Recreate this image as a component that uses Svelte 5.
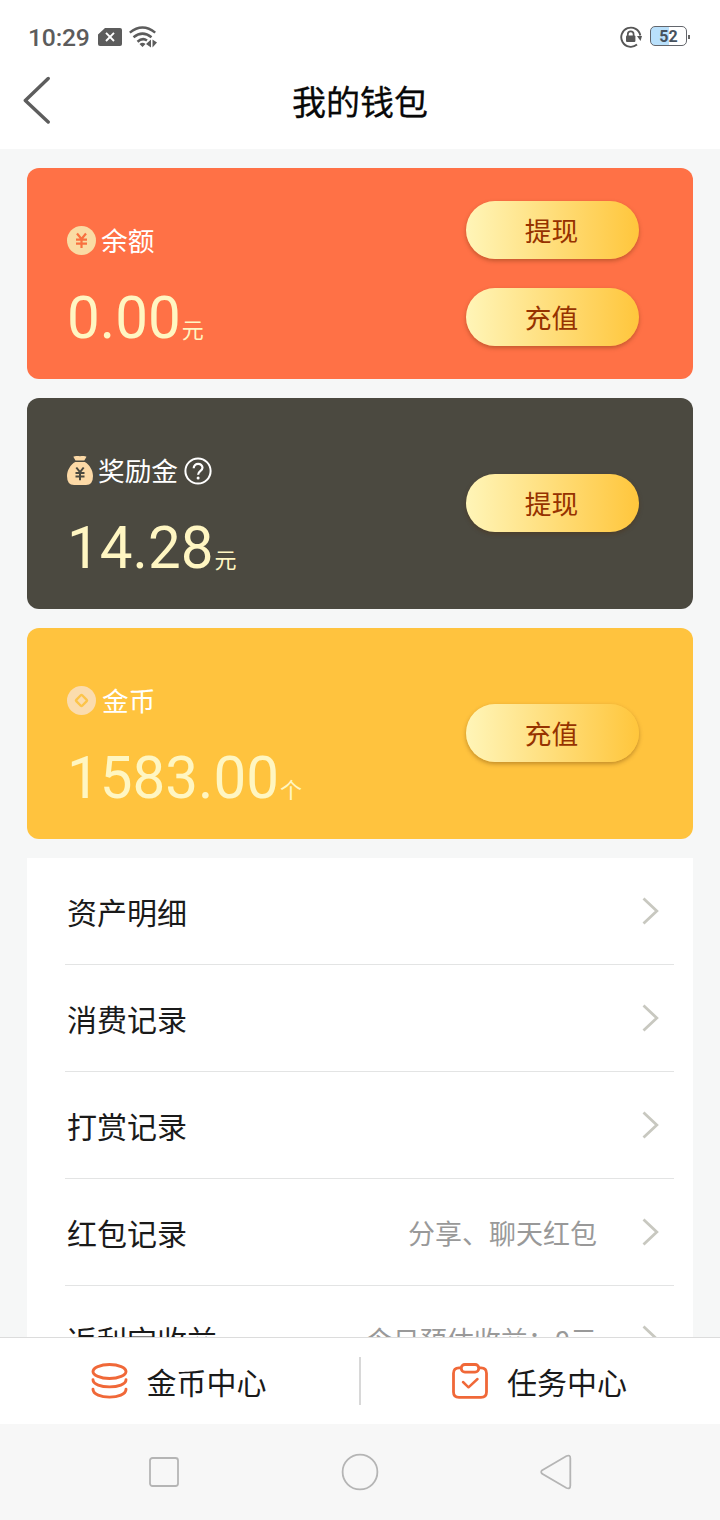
<script>
  const cards = [
    { kind: 'balance', label: '余额', amount: '0.00', unit: '元', actions: ['提现', '充值'] },
    { kind: 'bonus', label: '奖励金', amount: '14.28', unit: '元', actions: ['提现'] },
    { kind: 'coin', label: '金币', amount: '1583.00', unit: '个', actions: ['充值'] }
  ];
  const rows = [
    { label: '资产明细', note: '' },
    { label: '消费记录', note: '' },
    { label: '打赏记录', note: '' },
    { label: '红包记录', note: '分享、聊天红包' },
    { label: '返利宝收益', note: '今日预估收益：0元' }
  ];
</script>

<div class="screen">
  <header class="status">
    <span class="time">10:29</span>
    <svg class="sim" width="24" height="18" viewBox="0 0 24 18">
      <path d="M7 0H22Q24 0 24 2V16Q24 18 22 18H2Q0 18 0 16V6.500Z" fill="#5c5c5c" />
      <path d="M8 4.800 16 13M16 4.800 8 13" stroke="#fff" stroke-width="1.900" />
    </svg>
    <svg class="wifi" width="28" height="22" viewBox="0 0 28 22" fill="none" stroke="#5c5c5c" stroke-width="2.500">
      <path d="M.8 6.600Q13.500-3.600 26.200 6.600M4.500 11.200Q13.500 4 22.500 11.200M8.500 15.700Q13.500 11.300 18 14.500" />
      <path d="M10.500 18Q13.500 15.500 16.500 18L13.500 21ZM22 13.500V21.500L17 18ZM23.500 13.500V21.500L28 16.500Z" fill="#5c5c5c" stroke="none" />
    </svg>
    <span class="spacer"></span>
    <svg class="lock" width="22" height="22" viewBox="0 0 22 22" fill="none" stroke="#565656">
      <path d="M17 18.600A9.600 9.600 0 1 1 20.300 9.500" stroke-width="1.900" />
      <path d="M17 10H22L20.500 15Z" fill="#565656" stroke="none" />
      <path d="M7.800 10V8.200A2.900 2.900 0 0 1 13.600 8.200V10" stroke-width="1.700" />
      <rect x="6" y="9.600" width="9.400" height="6.400" rx="1" fill="#565656" stroke="none" />
    </svg>
    <div class="battery"><span>52</span></div>
    <i class="tip"></i>
  </header>

  <div class="titlebar">
    <svg class="back" width="28" height="48" viewBox="0 0 28 48" fill="none" stroke="#5d5d5d" stroke-width="3.400" stroke-linecap="round" stroke-linejoin="round">
      <path d="M25.200 2.500 2.300 24.500 25.200 46" />
    </svg>
    <h1>我的钱包</h1>
  </div>

  <main>
    {#each cards as card}
      <section class="card {card.kind}">
        <div class="info">
          <div class="label">
            {#if card.kind === 'balance'}
              <svg width="29" height="29" viewBox="0 0 29 29">
                <circle cx="14.500" cy="14.500" r="14.500" fill="#fadca4" />
                <path d="M10 7.500 14.500 13 19 7.500M14.500 13V22M9 13.600H20M9 17.600H20" fill="none" stroke="#f8713f" stroke-width="2.200" />
              </svg>
            {:else if card.kind === 'bonus'}
              <svg width="26" height="29" viewBox="0 0 26 29">
                <path d="M6.300.8Q9.500-.6 13 .3 16.500-.6 19.500.8L17.300 4.500H8.500ZM8.200 6H17.800C22.500 8.500 26 14.500 26 20Q26 29 19 29H7Q0 29 0 20C0 14.500 3.500 8.500 8.200 6Z" fill="#fcd9a6" />
                <path d="M9.300 11.500 13 16.200 16.700 11.500M13 16V24.200M8.500 17H17.500M8.500 20.500H17.500" fill="none" stroke="#4a483f" stroke-width="2" />
              </svg>
            {:else}
              <svg width="29" height="29" viewBox="0 0 29 29">
                <circle cx="14.500" cy="14.500" r="14.500" fill="#fbdcae" />
                <rect x="10.300" y="10.300" width="8.400" height="8.400" rx="1" transform="rotate(45 14.500 14.500)" fill="none" stroke="#fcc44a" stroke-width="2.400" />
              </svg>
            {/if}
            <span>{card.label}</span>
            {#if card.kind === 'bonus'}
              <svg class="help" width="28" height="28" viewBox="0 0 28 28" fill="none" stroke="#fff" stroke-width="2">
                <circle cx="14" cy="14" r="12.600" />
                <path d="M9.700 11.300C9.700 5.300 18.500 5.500 18.500 10.800 18.500 14 14.100 13.800 14.100 17.800" stroke-width="2.200" />
                <circle cx="14.100" cy="21" r="1.500" fill="#fff" stroke="none" />
              </svg>
            {/if}
          </div>
          <div class="amount"><b>{card.amount}</b><small>{card.unit}</small></div>
        </div>
        <div class="actions">
          {#each card.actions as action}
            <button>{action}</button>
          {/each}
        </div>
      </section>
    {/each}

    <ul>
      {#each rows as row}
        <li>
          <span>{row.label}</span>
          <em>{row.note}</em>
          <svg width="18" height="28" viewBox="0 0 18 28" fill="none" stroke="#c8c8c0" stroke-width="2.800">
            <path d="M1.500 1.500 14.800 14 1.500 26.500" />
          </svg>
        </li>
      {/each}
    </ul>
  </main>

  <footer>
    <div class="tab">
      <svg width="37" height="36" viewBox="0 0 37 36" fill="none" stroke="#f06838" stroke-width="2.900" stroke-linecap="round">
        <ellipse cx="18.500" cy="8.500" rx="16.500" ry="7" />
        <path d="M2 16.800C2 26.200 35 26.200 35 16.800M2 26.200C2 36.700 35 36.700 35 26.200" />
      </svg>
      <span>金币中心</span>
    </div>
    <i></i>
    <div class="tab">
      <svg width="36" height="36" viewBox="0 0 36 36" fill="none" stroke="#f06838" stroke-width="2.800" stroke-linecap="round" stroke-linejoin="round">
        <path d="M9 4.800H7Q1.500 4.800 1.500 10.300V29Q1.500 34.300 7 34.300H29Q34.500 34.300 34.500 29V10.300Q34.500 4.800 29 4.800H27" />
        <rect x="9.300" y="1.500" width="17.400" height="7.600" rx="3.600" />
        <path d="M11 19 16.500 24.300 25.500 16" stroke-width="2.500" />
      </svg>
      <span>任务中心</span>
    </div>
  </footer>

  <nav>
    <svg width="30" height="30" viewBox="0 0 30 30"><rect x="1" y="1" width="28" height="28" rx="2.500" /></svg>
    <svg width="38" height="38" viewBox="0 0 38 38"><circle cx="19" cy="19" r="17.400" /></svg>
    <svg width="32" height="36" viewBox="0 0 32 36"><path d="M2.200 16.200 26.500 2Q30.300.5 30.300 4.200V31.500Q30.300 35.500 26.500 34L2.200 19.800Q.2 18 2.200 16.200Z" /></svg>
  </nav>
</div>

<style>
  .screen {
    width: 720px;
    height: 1520px;
    display: flex;
    flex-direction: column;
    background: #f6f7f7;
    overflow: hidden;
    font-family: Roboto, "Noto Sans CJK SC", sans-serif;
    color: #1a1a1a;
  }
  svg { display: block; flex: none; }
  .status {
    flex: none;
    height: 74px;
    box-sizing: border-box;
    padding: 0 32px 1px 28px;
    display: flex;
    align-items: center;
    background: #fff;
  }
  .time {
    width: 70px;
    font-size: 24.700px;
    line-height: 30px;
    font-weight: 500;
    color: #5c5c5c;
    letter-spacing: -.2px;
    margin-top: 3px;
  }
  .sim { margin-top: 1px; }
  .wifi { margin-left: 7px; margin-top: 1px; }
  .spacer { flex: 1; }
  .lock { margin-right: 8px; }
  .battery {
    width: 37px;
    height: 20px;
    margin-top: -1px;
    box-sizing: border-box;
    border: 1.500px solid #63666c;
    border-radius: 5px;
    background: linear-gradient(90deg, #b9e0fb 52%, #fff 52%);
    text-align: center;
    font-size: 16px;
    line-height: 19px;
    font-weight: 700;
    color: #46525e;
  }
  .tip { width: 2px; height: 4px; margin: 0 -2px 0 1px; background: #666; }
  .titlebar {
    flex: none;
    height: 75px;
    display: flex;
    justify-content: center;
    background: #fff;
  }
  .back { margin: 2px 0 0 23px; }
  h1 {
    flex: 1;
    margin: 0 51px 0 0;
    text-align: center;
    font-size: 34px;
    line-height: 58px;
    font-weight: 400;
    color: #080808;
    -webkit-text-stroke: .3px #080808;
  }
  main {
    flex: 1;
    min-height: 0;
    overflow: hidden;
    padding: 19px 27px 0;
    display: flex;
    flex-direction: column;
    gap: 19px;
  }
  .card {
    flex: none;
    height: 211px;
    box-sizing: border-box;
    border-radius: 12px;
    padding: 0 54px 0 40px;
    display: flex;
    justify-content: space-between;
  }
  .balance { background: #ff7146; }
  .bonus { background: #4b4940; }
  .coin { background: #ffc33e; }
  .info { padding-top: 52px; }
  .label {
    height: 41px;
    display: flex;
    align-items: center;
    gap: 5px;
    font-size: 26.700px;
    line-height: 41px;
    color: #fff;
  }
  .label span { padding-top: 3px; }
  .coin .label span { padding-left: 1px; }
  .label .help { margin-left: 1px; }
  .amount {
    margin-top: 22px;
    height: 70px;
    line-height: 70px;
    color: #fff6c2;
    white-space: nowrap;
  }
  .amount b { font-size: 58.300px; font-weight: 400; }
  .amount small { font-size: 22px; margin-left: 1px; }
  .actions {
    display: flex;
    flex-direction: column;
    justify-content: center;
    gap: 29px;
    padding-bottom: 1px;
  }
  button {
    width: 173px;
    height: 58px;
    border: 0;
    padding: 4px 2px 0 0;
    border-radius: 29px;
    background: linear-gradient(90deg, #fff5b8, #ffc63c);
    box-shadow: 0 2px 4px rgba(80, 40, 0, .35);
    font-family: inherit;
    font-size: 26.700px;
    line-height: 54px;
    color: #963200;
  }
  ul {
    flex: none;
    margin: 0;
    padding: 0 19px 0 38px;
    list-style: none;
    background: #fff;
  }
  li {
    height: 107px;
    box-sizing: border-box;
    padding: 0 14px 0 2px;
    border-bottom: 1px solid #e3e4e4;
    display: flex;
    align-items: center;
    font-size: 30px;
  }
  li span { margin-top: -1px; }
  em {
    flex: 1;
    margin-right: 45px;
    text-align: right;
    font-style: normal;
    font-size: 27px;
    color: #999;
  }
  footer {
    flex: none;
    height: 87px;
    box-sizing: border-box;
    border-top: 1px solid #dcdcdc;
    background: #fff;
    display: flex;
    align-items: center;
  }
  .tab {
    flex: 1;
    padding-right: 2px;
    display: flex;
    align-items: center;
    justify-content: center;
    gap: 19px;
    font-size: 30px;
  }
  .tab span { margin-top: -1px; }
  footer i { width: 2px; height: 48px; background: #d8d8d8; }
  nav {
    flex: none;
    height: 96px;
    box-sizing: border-box;
    padding: 0 148px 0 149px;
    background: #f7f7f7;
    display: flex;
    align-items: center;
    justify-content: space-between;
  }
  nav svg { fill: none; stroke: #b5b5b5; stroke-width: 1.800; }
</style>
